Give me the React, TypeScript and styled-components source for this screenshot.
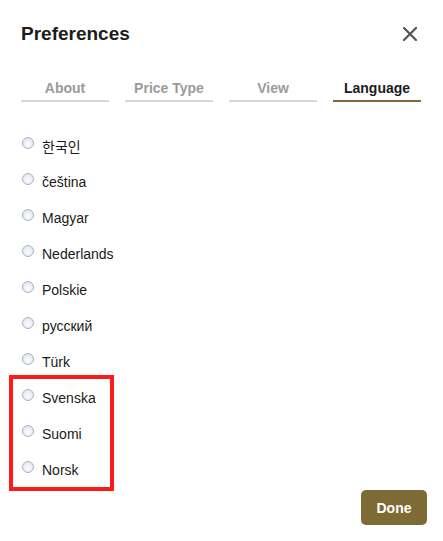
import { useState } from 'react';
import styled, { createGlobalStyle } from 'styled-components';

const GlobalStyle = createGlobalStyle`
  html, body {
    margin: 0;
    padding: 0;
    background: #fff;
  }
  body {
    font-family: "Liberation Sans", Arial, "Noto Sans CJK KR", sans-serif;
    color: #1c1c1c;
  }
`;

const Panel = styled.div`
  width: 443px;
  height: 541px;
  box-sizing: border-box;
  padding: 17px 16px 0 21px;
  display: flex;
  flex-direction: column;
`;

const Header = styled.header`
  display: flex;
  align-items: center;
  justify-content: space-between;
  height: 34px;
`;

const Title = styled.h1`
  margin: 0;
  font-size: 19px;
  line-height: 24px;
  font-weight: 700;
  color: #1c1c1c;
`;

const CloseButton = styled.button`
  width: 34px;
  height: 34px;
  padding: 0;
  border: 0;
  background: transparent;
  display: flex;
  align-items: center;
  justify-content: center;
  cursor: pointer;
  color: #555;
`;

const Tabs = styled.nav`
  display: grid;
  grid-template-columns: repeat(4, 88px);
  column-gap: 16px;
  margin-top: 29px;
`;

const Tab = styled.button<{ $active?: boolean }>`
  border: 0;
  background: transparent;
  padding: 0 0 3px;
  font-family: inherit;
  font-size: 14px;
  line-height: 17px;
  font-weight: 700;
  color: ${({ $active }) => ($active ? '#1c1c1c' : '#9b9b9b')};
  border-bottom: 2px solid ${({ $active }) => ($active ? '#7e6a33' : '#d8d8d8')};
  cursor: pointer;
`;

const List = styled.div`
  margin-top: 25px;
  display: flex;
  flex-direction: column;
`;

const Highlight = styled.div`
  width: 105px;
  box-sizing: border-box;
  margin: -4px 0 -4px -12px;
  padding-left: 8px;
  border: 4px solid #ff1a1a;
`;

const Row = styled.label`
  height: 36px;
  display: flex;
  align-items: center;
  gap: 8px;
  padding-left: 1px;
  padding-top: 1px;
  box-sizing: border-box;
  font-size: 14px;
  color: #1a1a1a;
  cursor: pointer;
  white-space: nowrap;
`;

const Radio = styled.input.attrs({ type: 'radio' })`
  appearance: none;
  -webkit-appearance: none;
  margin: 0 0 5px;
  width: 12px;
  height: 12px;
  flex: none;
  border-radius: 50%;
  border: 1px solid #aeb3c0;
  background: radial-gradient(circle at 50% 60%, #fdfdff 0%, #e2e9f4 70%, #d2d9e6 100%);
  box-sizing: border-box;
  &:checked {
    background: radial-gradient(circle, #fff 0 2px, #4a8ff0 3px);
    border-color: #3b7be0;
  }
`;

const Footer = styled.footer`
  display: flex;
  justify-content: flex-end;
  margin-top: 3px;
`;

const DoneButton = styled.button`
  width: 66px;
  height: 35px;
  border: 0;
  border-radius: 5px;
  background: #7e6a35;
  color: #fff;
  font-family: inherit;
  font-size: 14px;
  font-weight: 700;
  cursor: pointer;
`;

const tabs = ['About', 'Price Type', 'View', 'Language'];
const languages = ['한국인', 'čeština', 'Magyar', 'Nederlands', 'Polskie', 'русский', 'Türk'];
const marked = ['Svenska', 'Suomi', 'Norsk'];

export default function App() {
  const [tab, setTab] = useState('Language');
  const [lang, setLang] = useState('');

  const renderRow = (name: string) => (
    <Row key={name}>
      <Radio name="lang" checked={lang === name} onChange={() => setLang(name)} />
      {name}
    </Row>
  );

  return (
    <>
      <GlobalStyle />
      <Panel>
        <Header>
          <Title>Preferences</Title>
          <CloseButton aria-label="Close">
            <svg width="14" height="14" viewBox="0 0 14 14">
              <path d="M1 1L13 13M13 1L1 13" stroke="currentColor" strokeWidth="2.2" strokeLinecap="round" />
            </svg>
          </CloseButton>
        </Header>
        <Tabs>
          {tabs.map((t) => (
            <Tab key={t} $active={tab === t} onClick={() => setTab(t)}>
              {t}
            </Tab>
          ))}
        </Tabs>
        <List>
          {languages.map(renderRow)}
          <Highlight>{marked.map(renderRow)}</Highlight>
        </List>
        <Footer>
          <DoneButton>Done</DoneButton>
        </Footer>
      </Panel>
    </>
  );
}
